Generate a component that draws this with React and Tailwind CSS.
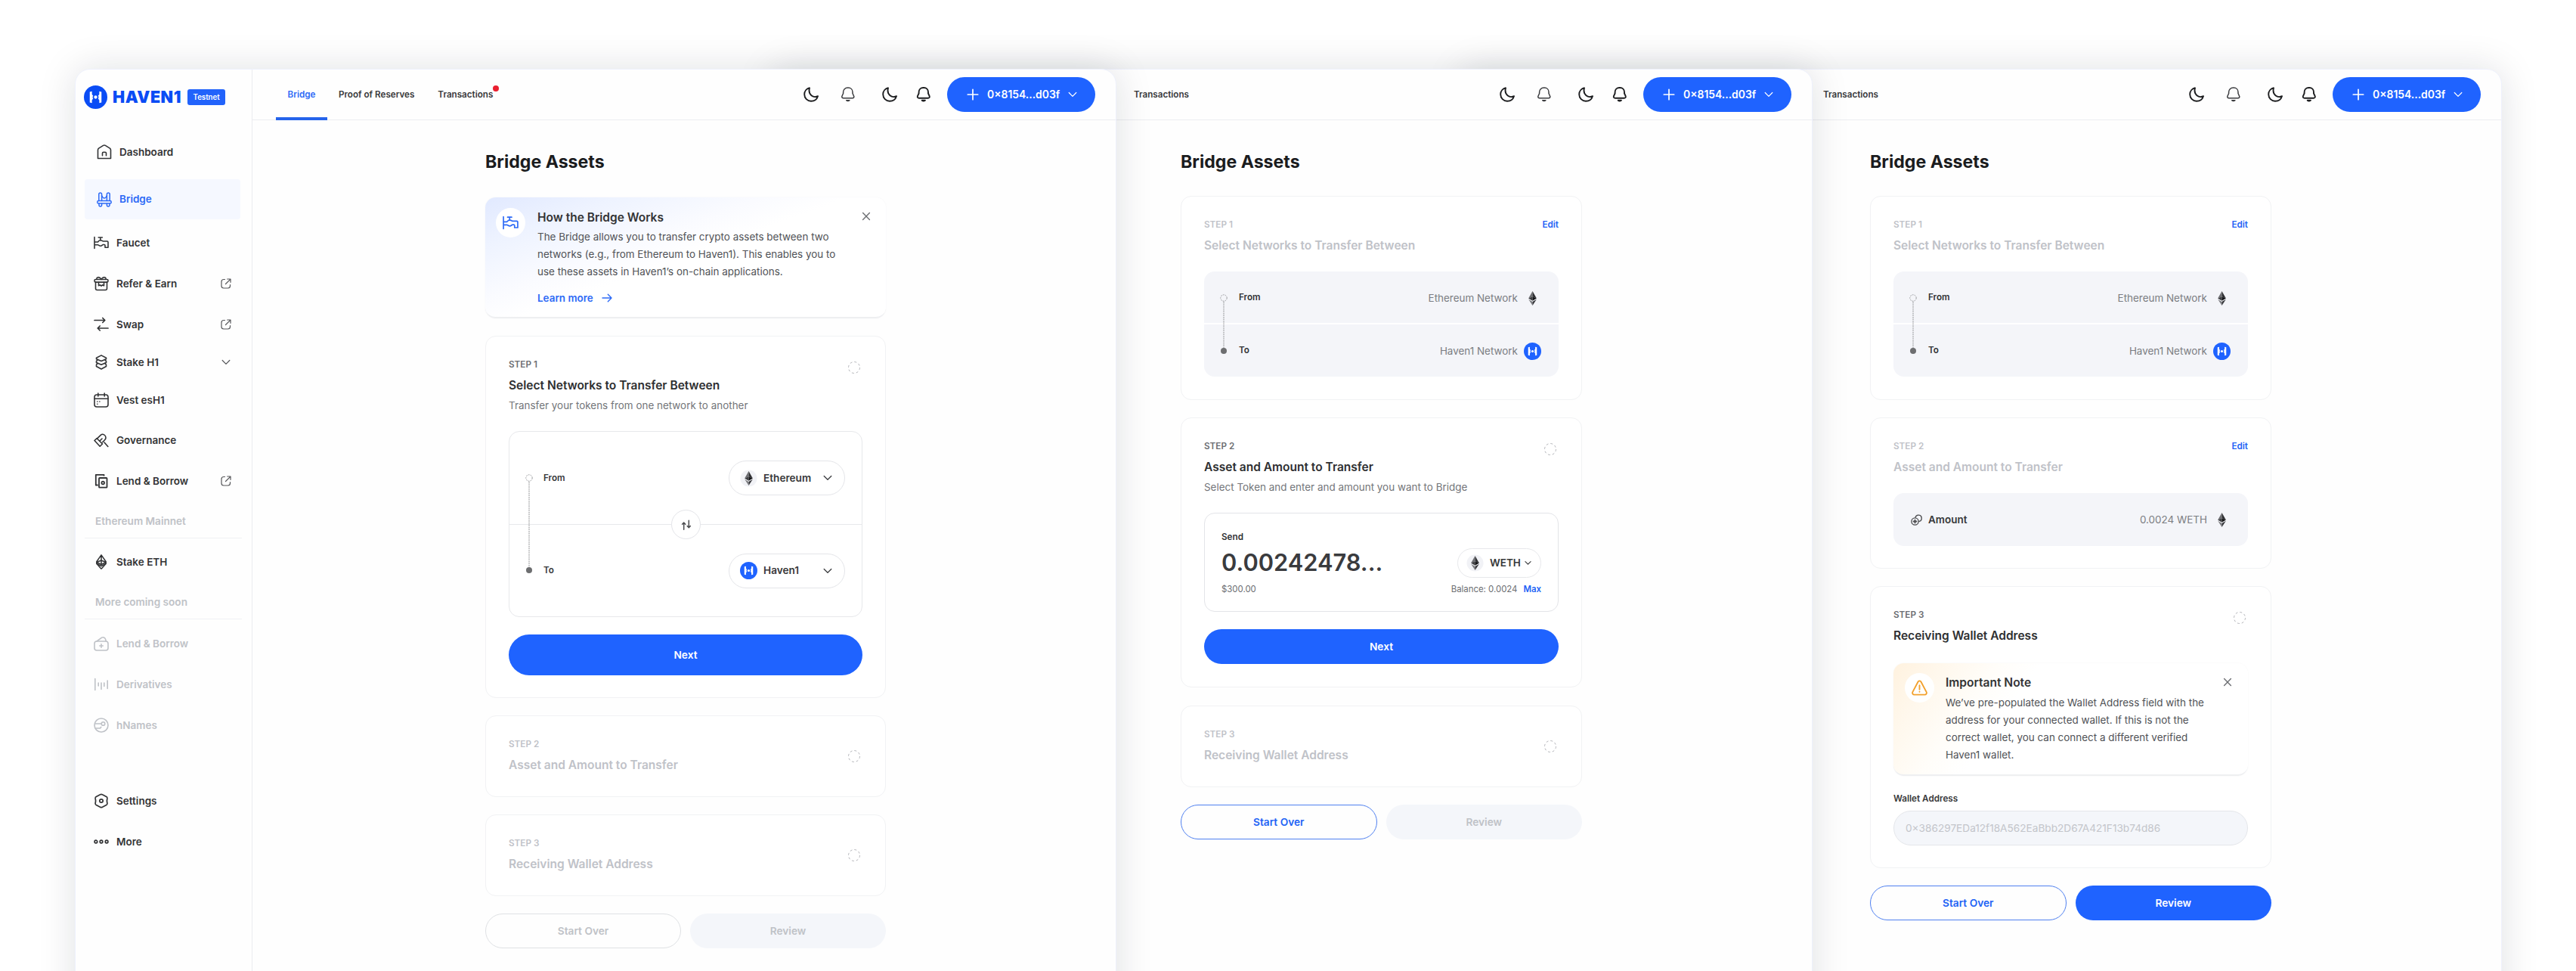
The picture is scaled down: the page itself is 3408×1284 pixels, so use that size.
function Svg({ size = 20, className = "", sw = 1.6, children, box = 20 }) {
  return (
    <svg
      width={size}
      height={size}
      viewBox={`0 0 ${box} ${box}`}
      fill="none"
      stroke="currentColor"
      strokeWidth={sw}
      strokeLinecap="round"
      strokeLinejoin="round"
      className={`shrink-0 ${className}`}
    >
      {children}
    </svg>
  );
}

/* ---------- icons ---------- */

const HomeIcon = () => (
  <Svg>
    <path d="M1.500 18.500V7.200c0-.9.4-1.600 1.100-2.100L8.600 1.400c.9-.5 1.900-.5 2.800 0l6 3.700c.7.500 1.100 1.200 1.100 2.100v11.300z" />
    <path d="M7.500 14.800v-3.200c0-.8.600-1.400 1.400-1.400h2.200c.8 0 1.400.6 1.400 1.400v3.200" />
  </Svg>
);
const BridgeIcon = () => (
  <Svg sw={1.500}>
    <path d="M2.800 11.500V2.900c0-1 .8-1.800 1.900-1.800s1.900.8 1.900 1.800v8.600M13.400 11.500V2.900c0-1 .8-1.800 1.900-1.800s1.900.8 1.900 1.800v8.600" />
    <path d="M6.600 4.800C7.500 7 8.700 8 10 8s2.500-1 3.400-3.200" />
    <rect x="0.800" y="11.600" width="18.400" height="3.500" rx="1.600" />
    <path d="M3 15.200v2c0 .9.800 1.700 1.800 1.700s1.800-.8 1.800-1.700v-2M13.400 15.200v2c0 .9.800 1.700 1.800 1.700s1.800-.8 1.800-1.700v-2" />
  </Svg>
);
const FaucetIcon = ({ size = 20 }) => (
  <Svg size={size}>
    <path d="M1 2.500v15M6.200 3h5.200M8.800 3v3.800" />
    <path d="M1.500 9h3.700c.7 0 1-2.200 3.600-2.200S11.700 8 12.600 8h5.200c.7 0 1.200.5 1.200 1.200v7h-4v-2.700c0-.6-.4-1-1-1h-1.600c-.8 0-1.600 1.700-3.400 1.700S6.500 12.800 5.500 12.800h-4" />
  </Svg>
);
const GiftIcon = () => (
  <Svg>
    <path d="M2.500 7.800v8.700c0 1.200.9 2 2 2h11c1.100 0 2-.8 2-2V7.800" />
    <rect x="1" y="4.500" width="18" height="3.600" rx="1.500" />
    <path d="M4 4.300c-.6-3 3.200-4 6 0 2.800-4 6.600-3 6 0" />
    <path d="M6.500 8.200v4.600l2-1 1.500 1.300 1.500-1.300 2 1V8.200" />
  </Svg>
);
const SwapIcon = () => (
  <Svg sw={1.700}>
    <path d="M1 4.500h13.500M11.800 1.500l3 3-3 3M19 15H5.500M8.200 12l-3 3 3 3" />
  </Svg>
);
const StackIcon = () => (
  <Svg sw={1.600}>
    <path d="M10 .9l6.500 3.400v1.500L10 8.500 3.500 5.800V4.300z" />
    <path d="M5.200 6.700L3.500 8.600v1.900L10 13.300l6.500-2.800V8.600l-1.700-1.900" />
    <path d="M5.200 11.400l-1.700 1.900v2.200L10 19l6.500-3.500v-2.200l-1.700-1.900" />
  </Svg>
);
const CalendarIcon = () => (
  <Svg>
    <rect x="1" y="3" width="18" height="16" rx="3" />
    <path d="M1 8.200h18M5.800 1v4M14.200 1v4M4.800 12h.1M7.800 12h.1M4.800 15.300h.1" />
  </Svg>
);
const GavelIcon = () => (
  <Svg>
    <path d="M1 9.500l3.200-2.800 7.300 7.300-3.300 3.200z" />
    <path d="M4.500 6.800l5-4.700c2.500-2 6.500.2 6.500 3.600 0 1.400-.6 2.300-1.400 3l-3 3M8 10l3-3M14 12l4.800 5.500" />
  </Svg>
);
const CopyIcon = () => (
  <Svg sw={1.800}>
    <path d="M13.500 2.500v-.7H2.800v13.700h2" strokeLinecap="square" />
    <rect x="7" y="6" width="10.500" height="12.700" rx=".8" />
    <circle cx="12.200" cy="12.500" r="1.800" />
  </Svg>
);
const EthOutlineIcon = () => (
  <Svg sw={1.500}>
    <path d="M10 .9L3.800 9.800v2.400l5.700 6.500c.3.300.7.300 1 0l5.700-6.500V9.800zM10 1v12.200M3.800 10.500l6.200 3 6.200-3M3.800 10.500L10 8l6.200 2.500" />
    <path d="M4.400 12.800l5.600 2.700 5.600-2.700" />
  </Svg>
);
const BagPlusIcon = () => (
  <Svg>
    <rect x="1" y="7" width="18" height="12" rx="3" />
    <path d="M4 7l6.600-4.800c1.800-1.200 4.400 0 5 2.200L16.300 7M10 10.800v4.400M7.800 13h4.400" />
  </Svg>
);
const BarsIcon = () => (
  <Svg>
    <path d="M1.800 2.500v15M6.200 8v4M10 8v8.500M13.800 8v4.500M18.200 5v10.500" />
  </Svg>
);
const KeyIcon = () => (
  <Svg>
    <circle cx="10" cy="10" r="9" />
    <path d="M1.500 8h8.500M3 14h5.500l1.200-1.600" />
    <circle cx="12.500" cy="8" r="2.300" />
  </Svg>
);
const HexIcon = () => (
  <Svg sw={1.700}>
    <path d="M8.500 1.800c.9-.6 2.100-.6 3 0l5.200 2.700c.9.500 1.300 1.200 1.200 2.200l-.5 3.300.5 3.300c.1 1-.3 1.700-1.200 2.200l-5.200 2.700c-.9.600-2.100.6-3 0l-5.200-2.700c-.9-.5-1.300-1.200-1.200-2.200l.5-3.300-.5-3.300c-.1-1 .3-1.700 1.200-2.200z" />
    <circle cx="10" cy="10" r="2.200" />
  </Svg>
);
const DotsIcon = () => (
  <Svg sw={1.700}>
    <circle cx="2.900" cy="10" r="1.800" />
    <circle cx="10" cy="10" r="1.800" />
    <circle cx="17.100" cy="10" r="1.800" />
  </Svg>
);
const ExternalIcon = () => (
  <Svg size={14} box={14} sw={1.200}>
    <path d="M5.500 1.500H4C2.300 1.500 1 2.800 1 4.500V10c0 1.700 1.300 3 3 3h5.500c1.700 0 3-1.300 3-3V8.500M8.700 1h4.300v4.300M12.700 1.300L6.500 7.500" />
  </Svg>
);
const Chevron = ({ size = 12, sw = 1.200, className = "" }) => (
  <Svg size={size} box={12} sw={sw} className={className}>
    <path d="M1.200 3.500L6 8.300l4.800-4.800" />
  </Svg>
);
const MoonIcon = () => (
  <Svg sw={1.900}>
    <path d="M8 1.300C4 2.200 1.200 5.700 1.200 9.800c0 4.900 4 8.900 8.800 8.900 4.200 0 7.800-2.700 9-6.500-5.800 2.700-13.400-1.700-11-10.900z" />
  </Svg>
);
const BellIcon = ({ sw }) => (
  <Svg sw={sw}>
    <path d="M3.800 14.700c-1.500 0-2.400-1.100-1.900-2.500L3.600 8.500V6.800C3.600 3.500 6.100 1 9.400 1h.9c3.300 0 5.700 2.500 5.700 5.800v1.700l1.700 3.700c.5 1.400-.4 2.500-1.900 2.500z" />
    <path d="M7.700 17.700c1.200 1 2.900 1 4.200 0z" fill="currentColor" />
  </Svg>
);
const PlusIcon = () => (
  <Svg size={16} box={16} sw={1.700}>
    <path d="M8 1.300v13.400M1.300 8h13.400" />
  </Svg>
);
const CloseIcon = () => (
  <Svg size={12} box={12} sw={1.400}>
    <path d="M1.600 1.600l8.800 8.800M10.400 1.600l-8.800 8.800" />
  </Svg>
);
const HavenMark = ({ size, color = "#1f63ff" }) => (
  <svg width={size} height={size} viewBox="0 0 32 32" className="shrink-0">
    <circle cx="16" cy="16" r="16" fill={color} />
    <path d="M8 8.800L11 8v3.500c0 1.500 1.300 2 2.800 2.800v3.400c-1.500.8-2.800 1.300-2.800 2.800V24l-3-.8z" fill="#fff" />
    <path d="M24 8.800L21 8v3.500c0 1.500-1.300 2-2.800 2.800v3.400c1.500.8 2.800 1.300 2.800 2.800V24l3-.8z" fill="#fff" />
    <circle cx="16" cy="16" r="4" fill={color} />
    <circle cx="16" cy="16" r="2.200" fill="#fff" />
  </svg>
);
const EthMark = ({ halo }) => (
  <svg width="23" height="23" viewBox="0 0 24 24" className="shrink-0">
    {halo && <circle cx="12" cy="12" r="11.500" fill="#f1f2f6" />}
    <path d="M12 2.200L6.400 12 12 9.600z" fill="#6d6e72" />
    <path d="M12 2.200L17.600 12 12 9.600z" fill="#2f3033" />
    <path d="M6.400 12L12 9.600v5.700z" fill="#3c3d40" />
    <path d="M17.600 12L12 9.600v5.700z" fill="#131416" />
    <path d="M6.400 13.400L12 16.700v5.200z" fill="#7c7d81" />
    <path d="M17.600 13.400L12 16.700v5.200z" fill="#35363a" />
  </svg>
);
const DashedCircle = () => (
  <svg width="18" height="18" viewBox="0 0 18 18" className="shrink-0" fill="none">
    <circle cx="9" cy="9" r="7.500" stroke="#b4b5ba" strokeWidth="1" strokeDasharray="3 2.900" />
  </svg>
);
const RouteLine = ({ length }) => (
  <svg width="12" height={length + 12} viewBox={`0 0 12 ${length + 12}`} fill="none" className="shrink-0">
    <circle cx="6" cy="6" r="4.200" stroke="#98999c" strokeWidth="1" strokeDasharray="1.800 1.200" />
    <path d={`M6 11V${length + 2}`} stroke="#98999c" strokeWidth="1.200" strokeDasharray="1.500 1" />
    <circle cx="6" cy={length + 6} r="4" fill="#6d6e70" />
  </svg>
);

/* ---------- sidebar ---------- */

function NavItem({ icon: Icon, label, trailing, muted, height = "h-[54px]" }) {
  return (
    <div className={`flex items-center pl-6 pr-[27px] ${height} ${muted ? "text-[#bfc2c7]" : "text-[#323335]"}`}>
      <Icon />
      <span className="ml-[10px] flex-1 text-[13.500px] font-semibold">{label}</span>
      {trailing && <span className="text-[#56575a]">{trailing}</span>}
    </div>
  );
}

function NavHeading({ children }) {
  return (
    <div className="ml-3 mr-[13px] h-[49px] border-b border-[#f0f1f4] pl-[14px] pt-[3px] text-[13.600px] font-semibold leading-[46px] text-[#bfc2c7]">
      {children}
    </div>
  );
}

function Sidebar() {
  return (
    <aside className="flex w-[234px] shrink-0 flex-col border-r border-[#ebecf0] pt-[21px]">
      <div className="flex h-[31px] items-center pl-[11px]">
        <HavenMark size={31} color="#0a4cf5" />
        <span className="ml-[7px] w-[93px] text-[21.500px] font-black leading-[31px] tracking-[0.500px] text-[#0a4cf5]">HAVEN1</span>
        <span className="ml-[6px] h-[21px] rounded-[3px] bg-[#2263fb] px-[7.500px] text-[9.700px] font-semibold leading-[22px] text-white">
          Testnet
        </span>
      </div>
      <div className="mt-[30px] flex h-[54px] items-center pl-7 text-[#323335]">
        <HomeIcon />
        <span className="ml-[10px] text-[13.500px] font-semibold">Dashboard</span>
      </div>
      <div className="ml-3 mr-[15px] mt-[9px] flex h-[53px] items-center rounded-[4px] bg-[#f5f8ff] pl-4 text-[#2d6af6]">
        <BridgeIcon />
        <span className="ml-[10px] text-[13.500px] font-semibold">Bridge</span>
      </div>
      <div className="mt-1 flex flex-col">
        <NavItem icon={FaucetIcon} label="Faucet" />
        <NavItem icon={GiftIcon} label="Refer & Earn" trailing={<ExternalIcon />} />
        <NavItem icon={SwapIcon} label="Swap" trailing={<ExternalIcon />} />
        <NavItem icon={StackIcon} label="Stake H1" trailing={<Chevron className="mr-px" />} height="h-[46px]" />
        <NavItem icon={CalendarIcon} label="Vest esH1" />
        <NavItem icon={GavelIcon} label="Governance" height="h-[53px]" />
        <NavItem icon={CopyIcon} label="Lend & Borrow" trailing={<ExternalIcon />} />
        <NavHeading>Ethereum Mainnet</NavHeading>
        <div className="h-1" />
        <NavItem icon={EthOutlineIcon} label="Stake ETH" />
        <NavHeading>More coming soon</NavHeading>
        <div className="h-[5px]" />
        <NavItem icon={BagPlusIcon} label="Lend & Borrow" muted />
        <NavItem icon={BarsIcon} label="Derivatives" muted />
        <NavItem icon={KeyIcon} label="hNames" muted />
      </div>
      <div className="mt-[46px] flex flex-col">
        <NavItem icon={HexIcon} label="Settings" />
        <NavItem icon={DotsIcon} label="More" />
      </div>
    </aside>
  );
}

/* ---------- top bar ---------- */

function TopActions() {
  return (
    <div className="ml-auto flex items-center pr-[27px] text-[#1c1d1f]">
      <MoonIcon />
      <span className="ml-[29px] flex text-[#3a3b3e]">
        <BellIcon sw={1.500} />
      </span>
      <span className="ml-[35px] flex">
        <MoonIcon />
      </span>
      <span className="ml-[25px] flex">
        <BellIcon sw={1.900} />
      </span>
      <div className="ml-[21px] flex h-[46px] w-[196px] items-center rounded-full bg-[#1f63ff] pl-[26px] text-white">
        <PlusIcon />
        <span className="ml-[11px] text-[13.900px] font-semibold">0×8154...d03f</span>
        <Chevron className="ml-[11px]" sw={1.200} />
      </div>
    </div>
  );
}

/* ---------- cards ---------- */

function Card({ className = "", children }) {
  return <section className={`rounded-[14px] border border-[#f1f2f4] bg-white px-[30px] pt-[27px] ${className}`}>{children}</section>;
}

function StepHead({ step, title, sub, status, muted, middle }) {
  return (
    <div className={`flex justify-between ${middle ? "items-center" : "items-start"}`}>
      <div>
        <div className={`text-[11.700px] font-semibold leading-[21px] ${muted ? "text-[#bfc2c8]" : "text-[#6c6e72]"}`}>{step}</div>
        <div className={`mt-[3px] text-[15.530px] font-semibold leading-[28px] ${muted ? "text-[#bfc2c8]" : "text-[#2e2f31]"}`}>{title}</div>
        {sub && <div className="mt-[2px] text-[13.450px] leading-5 text-[#737579]">{sub}</div>}
      </div>
      {status === "edit" ? (
        <span className="text-[11.700px] font-semibold leading-[21px] text-[#2263f5]">Edit</span>
      ) : (
        <span className={middle ? "mr-[2px] -mt-px" : "mr-[2px] mt-[5px]"}>
          <DashedCircle />
        </span>
      )}
    </div>
  );
}

function CollapsedStep({ step, title, className }) {
  return (
    <Card className={`h-[108px] ${className}`}>
      <StepHead step={step} title={title} muted middle />
    </Card>
  );
}

function NextButton({ className }) {
  return (
    <button className={`flex w-full items-center justify-center rounded-full bg-[#1f63ff] pt-px text-[13.700px] font-semibold text-white ${className}`}>
      Next
    </button>
  );
}

function FooterButtons({ start, review, className }) {
  return (
    <div className={`grid h-[46px] grid-cols-2 gap-3 text-[13.700px] font-semibold ${className}`}>
      <button
        className={`rounded-full border pt-px ${start ? "border-[#4f80f0] text-[#2263f5]" : "border-[#dfe1e4] text-[#bfc2c7]"}`}
      >
        Start Over
      </button>
      <button className={`rounded-full pt-px ${review ? "bg-[#1f63ff] text-white" : "bg-[#f4f6fa] text-[#bfc2c7]"}`}>Review</button>
    </div>
  );
}

function NetworkSummary() {
  return (
    <Card className="h-[270px]">
      <StepHead step="STEP 1" title="Select Networks to Transfer Between" status="edit" muted />
      <div className="relative mt-5 flex h-[139px] flex-col overflow-hidden rounded-[14px] bg-[#f4f5f9]">
        <div className="flex h-[70px] items-center justify-between border-b-2 border-white pl-[46px] pr-[23px] pt-[2px]">
          <span className="text-[11.700px] font-semibold text-[#323335]">From</span>
          <span className="flex items-center gap-2 text-[13.450px] text-[#7b7d82]">
            Ethereum Network <EthMark />
          </span>
        </div>
        <div className="flex h-[69px] items-center justify-between pl-[46px] pr-[23px] pt-px">
          <span className="text-[11.700px] font-semibold text-[#323335]">To</span>
          <span className="flex items-center gap-2 text-[13.450px] text-[#7b7d82]">
            Haven1 Network <HavenMark size={23} />
          </span>
        </div>
        <div className="absolute left-[20px] top-[29px]">
          <RouteLine length={70} />
        </div>
      </div>
    </Card>
  );
}

function NetworkPill({ icon, label }) {
  return (
    <div className="flex h-[46px] w-[154px] items-center rounded-full border border-[#e4e5e9] pl-[14px] pr-[16px]">
      {icon}
      <span className="ml-2 flex-1 text-[13.600px] font-semibold text-[#37383a]">{label}</span>
      <Chevron className="text-[#3c3d40]" sw={1.300} />
    </div>
  );
}

/* ---------- screens ---------- */

function SelectNetworksScreen() {
  return (
    <div className="ml-[308px] w-[530px] pt-[39px]">
      <h1 className="text-[23.150px] font-bold leading-8 text-[#1b1c1e]">Bridge Assets</h1>
      <section className="relative mt-[31px] flex h-[160px] overflow-hidden rounded-[14px] border-b-2 border-[#eeeff1] bg-[linear-gradient(160deg,#e1e9ff_0%,#eef3ff_18%,#fafbff_38%,#ffffff_50%)] pl-[14px] pt-[14px] shadow-[0_0_2px_rgba(20,30,60,0.06)]">
        <div className="flex size-[39px] items-center justify-center rounded-full bg-white text-[#2d6af6]">
          <FaucetIcon size={21} />
        </div>
        <div className="ml-4">
          <div className="text-[15.500px] font-semibold leading-[25px] text-[#323335]">How the Bridge Works</div>
          <p className="mt-[2px] text-[13.450px] leading-[23px] text-[#505256]">
            The Bridge allows you to transfer crypto assets between two
            <br />
            networks (e.g., from Ethereum to Haven1). This enables you to
            <br />
            use these assets in Haven1’s on-chain applications.
          </p>
          <div className="mt-3 flex items-center text-[13.450px] font-semibold leading-[22px] text-[#2d6af6]">
            Learn more
            <Svg size={14} box={14} sw={1.400} className="ml-[11px]">
              <path d="M1 7h12M8.300 2.300L13 7l-4.700 4.700" />
            </Svg>
          </div>
        </div>
        <span className="ml-auto mr-[20px] mt-[5px] text-[#6c6e72]">
          <CloseIcon />
        </span>
      </section>

      <Card className="mt-[23px] h-[479px]">
        <StepHead
          step="STEP 1"
          title="Select Networks to Transfer Between"
          sub="Transfer your tokens from one network to another"
        />
        <div className="relative mt-6 h-[246px] rounded-[14px] border border-[#e7e8eb]">
          <div className="flex h-[123px] items-center justify-between border-b border-[#e7e8eb] pl-[45px] pr-[22px]">
            <span className="pt-px text-[11.700px] font-semibold text-[#37383a]">From</span>
            <NetworkPill icon={<EthMark halo />} label="Ethereum" />
          </div>
          <div className="flex h-[121px] items-center justify-between pl-[45px] pr-[22px]">
            <span className="text-[11.700px] font-semibold text-[#37383a]">To</span>
            <NetworkPill icon={<HavenMark size={23} />} label="Haven1" />
          </div>
          <div className="absolute left-5 top-[55px]">
            <RouteLine length={122} />
          </div>
          <div className="absolute left-[214px] top-[103px] flex size-[39px] items-center justify-center rounded-full border border-[#e4e5e9] bg-white text-[#4a4b4e]">
            <Svg size={14} box={14} sw={1.500}>
              <path d="M3.700 13.200V4.200M1.600 6.200l2.100-2.200 2.100 2.200M10.300 1.200v9M8.200 8.500l2.100 2.200 2.100-2.200" />
            </Svg>
          </div>
        </div>
        <NextButton className="mt-[23px] h-[54px]" />
      </Card>
      <CollapsedStep className="mt-[23px]" step="STEP 2" title="Asset and Amount to Transfer" />
      <CollapsedStep className="mt-[23px]" step="STEP 3" title="Receiving Wallet Address" />
      <FooterButtons className="mt-[23px]" />
    </div>
  );
}

function AmountScreen() {
  return (
    <div className="ml-[541px] w-[531px] pt-[39px]">
      <h1 className="mb-[29px] text-[23.150px] font-bold leading-8 text-[#1b1c1e]">Bridge Assets</h1>
      <NetworkSummary />
      <Card className="mt-[23px] h-[357px]">
        <StepHead step="STEP 2" title="Asset and Amount to Transfer" sub="Select Token and enter and amount you want to Bridge" />
        <div className="mt-6 flex h-[131px] flex-col rounded-[14px] border border-[#e3e4e8] px-[22px] pt-[21px]">
          <div className="text-[11.700px] font-semibold leading-5 text-[#323335]">Send</div>
          <div className="mt-[4px] flex h-[40px] items-center justify-between">
            <span className="text-[30.800px] font-semibold leading-[40px] text-[#3a3b3e]">0.00242478...</span>
            <div className="flex h-[39px] w-[111px] items-center rounded-full border border-[#e7e8eb] pl-[11px] text-[#37383a]">
              <EthMark halo />
              <span className="ml-2 flex-1 text-[13.500px] font-semibold">WETH</span>
              <Chevron size={9} sw={1.500} className="mr-[12px]" />
            </div>
          </div>
          <div className="mt-[5px] flex justify-between text-[11.400px] leading-5 text-[#6c6e72]">
            <span>$300.00</span>
            <span>
              Balance: 0.0024<span className="ml-2 font-semibold text-[#2263f5]">Max</span>
            </span>
          </div>
        </div>
        <NextButton className="mt-[23px] h-[46px]" />
      </Card>
      <CollapsedStep className="mt-6" step="STEP 3" title="Receiving Wallet Address" />
      <FooterButtons className="mt-[23px]" start />
    </div>
  );
}

function WalletScreen() {
  return (
    <div className="ml-[541px] w-[531px] pt-[39px]">
      <h1 className="mb-[29px] text-[23.150px] font-bold leading-8 text-[#1b1c1e]">Bridge Assets</h1>
      <NetworkSummary />
      <Card className="mt-[23px] h-[200px]">
        <StepHead step="STEP 2" title="Asset and Amount to Transfer" status="edit" muted />
        <div className="mt-5 flex h-[70px] items-center rounded-[14px] bg-[#f4f5f9] pl-[23px] pr-[23px]">
          <Svg size={15} box={15} sw={1.300} className="text-[#4a4b4e]">
            <circle cx="5.500" cy="9.500" r="4.600" />
            <path d="M6 4.200a4.200 4.200 0 1 1 4.800 5.300" />
            <path d="M5.500 7.600v3.800M3.600 9.500h3.800" strokeWidth="1.800" />
          </Svg>
          <span className="ml-[8px] text-[13.500px] font-semibold text-[#37383a]">Amount</span>
          <span className="ml-auto flex items-center gap-2 text-[13.450px] text-[#7b7d82]">
            0.0024 WETH <EthMark />
          </span>
        </div>
      </Card>
      <Card className="mt-[23px] h-[373px]">
        <StepHead step="STEP 3" title="Receiving Wallet Address" />
        <div className="mt-[22px] flex h-[149px] overflow-hidden rounded-[14px] border-b-2 border-[#eeeff1] bg-[linear-gradient(125deg,#fff2df_0%,#fff8ed_12%,#fffdf9_24%,#ffffff_34%)] pl-[15px] pt-[13px] shadow-[0_0_2px_rgba(20,30,60,0.05)]">
          <div className="flex size-[39px] items-center justify-center rounded-full bg-white text-[#f2a12e]">
            <Svg size={21} sw={1.800}>
              <path d="M8.300 2.200c.8-1.200 2.600-1.200 3.400 0l7 13.200c.7 1.500-.3 3.300-2 3.300H3.300c-1.700 0-2.700-1.800-2-3.300z" />
              <path d="M10 6.800v5.400M10 15v.1" />
            </Svg>
          </div>
          <div className="ml-[15px]">
            <div className="text-[15.550px] font-semibold leading-[26px] text-[#323335]">Important Note</div>
            <p className="mt-[2px] text-[13.450px] leading-[23px] text-[#505256]">
              We’ve pre-populated the Wallet Address field with the
              <br />
              address for your connected wallet. If this is not the
              <br />
              correct wallet, you can connect a different verified
              <br />
              Haven1 wallet.
            </p>
          </div>
          <span className="ml-auto mr-[21px] mt-[6px] text-[#6c6e72]">
            <CloseIcon />
          </span>
        </div>
        <div className="mt-5 text-[11.700px] font-semibold leading-[21px] text-[#37383a]">Wallet Address</div>
        <div className="mt-[5px] h-[46px] rounded-full border border-[#e4e6ea] bg-[#f4f6fa] pl-[15px] text-[13.640px] leading-[45px] text-[#c3c5ca]">
          0×386297EDa12f18A562EaBbb2D67A421F13b74d86
        </div>
      </Card>
      <FooterButtons className="mt-[23px]" start review />
    </div>
  );
}

function Frame({ className = "", children }) {
  return (
    <div
      className={`relative flex h-[1400px] w-[1378px] shrink-0 overflow-clip rounded-[20px] border border-[#eef1fd] bg-[#fefefe] ${className}`}
    >
      {children}
    </div>
  );
}

function TopBar({ children }) {
  return <header className="flex h-[67px] items-center border-b border-[#ecedf1] text-[11.650px] font-semibold text-[#37383a]">{children}</header>;
}

export default function App() {
  return (
    <div className="flex h-[1284px] w-[3408px] items-start overflow-hidden bg-white pl-[99px] pt-[91px] font-['Inter',sans-serif]">
      <Frame className="z-30 shadow-[0_0_50px_rgba(15,20,40,0.13)]">
        <Sidebar />
        <div className="flex-1">
          <TopBar>
            <nav className="ml-[31px] flex h-full">
              <span className="-mb-px w-[68px] border-b-4 border-[#2563eb] text-center leading-[66px] text-[#2d6af6]">Bridge</span>
              <span className="ml-[15px] leading-[66px]">Proof of Reserves</span>
              <span className="relative ml-[31px] leading-[66px]">
                Transactions
                <span className="absolute -right-[8px] top-[21px] size-2 rounded-full bg-[#ea1f2f]" />
              </span>
            </nav>
            <TopActions />
          </TopBar>
          <SelectNetworksScreen />
        </div>
      </Frame>
      <Frame className="z-20 -ml-[457px] shadow-[0_0_50px_rgba(15,20,40,0.13)]">
        <div className="flex-1">
          <TopBar>
            <span className="ml-[479px] leading-[66px]">Transactions</span>
            <TopActions />
          </TopBar>
          <AmountScreen />
        </div>
      </Frame>
      <Frame className="z-10 -ml-[466px] shadow-[0_0_50px_rgba(15,20,40,0.13)]">
        <div className="flex-1">
          <TopBar>
            <span className="ml-[479px] leading-[66px]">Transactions</span>
            <TopActions />
          </TopBar>
          <WalletScreen />
        </div>
      </Frame>
    </div>
  );
}
